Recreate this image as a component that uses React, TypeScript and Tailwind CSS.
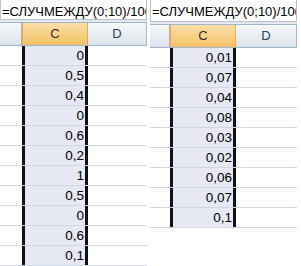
const font = { fontFamily: '"Liberation Sans", Arial, sans-serif' };

type PanelProps = {
  formula: string;
  values: string[];
  bWidth: string;
  dWidth: string;
};

function Panel({ formula, values, bWidth, dWidth }: PanelProps) {
  return (
    <div className="w-[147px] shrink-0 overflow-hidden flex flex-col">
      {/* formula bar */}
      <div className="h-[22px] border-x border-b border-[#b9c2cd] bg-white overflow-hidden whitespace-nowrap pl-[1px] pt-[4px] text-[13px] leading-[15px] text-black">
        {formula}
      </div>
      <div className="h-[2px] bg-[#e4e9f0]" />

      {/* column headers */}
      <div className="flex h-[24px] border-y border-[#9eb6ce] text-[13px] leading-[22px]">
        <div className={`${bWidth} shrink-0 bg-gradient-to-b from-[#f6f8fa] to-[#dde3ea] border-r border-[#9eb6ce]`} />
        <div className="w-[66px] shrink-0 bg-gradient-to-b from-[#fbe0a6] to-[#f3c164] border-x border-[#f2a94a] text-center text-[#303030]">
          C
        </div>
        <div className={`${dWidth} shrink-0 bg-gradient-to-b from-[#f6f8fa] to-[#dde3ea] border-r border-[#9eb6ce] text-center text-[#27415f]`}>
          D
        </div>
      </div>

      {/* rows */}
      {values.map((v, i) => (
        <div key={i} className="flex h-[20px] text-[13.5px] leading-[19px]">
          <div className={`${bWidth} shrink-0 bg-white border-b border-[#d0d7e5]`} />
          <div className="w-[66px] shrink-0 bg-[#e6e8f3] border-b border-[#d0d7e5] relative">
            <div className="absolute inset-y-0 left-0 w-[3px] bg-[#111]" />
            <div className="absolute inset-y-0 right-0 w-[3px] bg-[#111]" />
            <div className="pr-[4px] text-right text-black">{v}</div>
          </div>
          <div className={`${dWidth} shrink-0 bg-white border-b border-[#d0d7e5]`} />
        </div>
      ))}
    </div>
  );
}

export default function App() {
  return (
    <div className="w-[301px] h-[266px] bg-white flex gap-[3px] overflow-hidden" style={font}>
      <Panel
        formula="=СЛУЧМЕЖДУ(0;10)/100"
        values={['0', '0,5', '0,4', '0', '0,6', '0,2', '1', '0,5', '0', '0,6', '0,1']}
        bWidth="w-[22px]"
        dWidth="w-[59px]"
      />
      <Panel
        formula="=СЛУЧМЕЖДУ(0;10)/100"
        values={['0,01', '0,07', '0,04', '0,08', '0,03', '0,02', '0,06', '0,07', '0,1']}
        bWidth="w-[20px]"
        dWidth="w-[61px]"
      />
    </div>
  );
}
